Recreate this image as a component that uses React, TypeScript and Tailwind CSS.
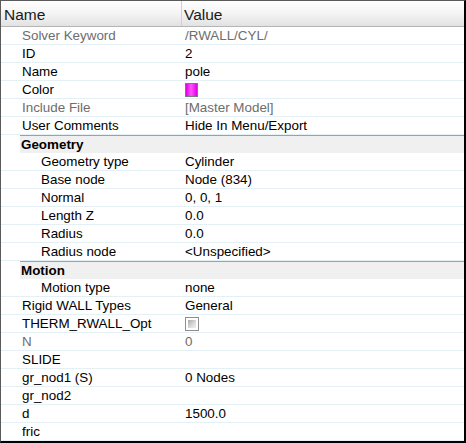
import React from 'react'

type Row = {
  name: string
  value?: string
  level?: 0 | 1
  disabled?: boolean
  kind?: 'section' | 'color' | 'check'
}

const rows: Row[] = [
  { name: 'Solver Keyword', value: '/RWALL/CYL/', disabled: true },
  { name: 'ID', value: '2' },
  { name: 'Name', value: 'pole' },
  { name: 'Color', kind: 'color' },
  { name: 'Include File', value: '[Master Model]', disabled: true },
  { name: 'User Comments', value: 'Hide In Menu/Export' },
  { name: 'Geometry', kind: 'section' },
  { name: 'Geometry type', value: 'Cylinder', level: 1 },
  { name: 'Base node', value: 'Node (834)', level: 1 },
  { name: 'Normal', value: '0, 0, 1', level: 1 },
  { name: 'Length Z', value: '0.0', level: 1 },
  { name: 'Radius', value: '0.0', level: 1 },
  { name: 'Radius node', value: '<Unspecified>', level: 1 },
  { name: 'Motion', kind: 'section' },
  { name: 'Motion type', value: 'none', level: 1 },
  { name: 'Rigid WALL Types', value: 'General' },
  { name: 'THERM_RWALL_Opt', kind: 'check' },
  { name: 'N', value: '0', disabled: true },
  { name: 'SLIDE' },
  { name: 'gr_nod1 (S)', value: '0 Nodes' },
  { name: 'gr_nod2' },
  { name: 'd', value: '1500.0' },
  { name: 'fric' },
]

function ValueCell({ row }: { row: Row }) {
  if (row.kind === 'color') {
    return (
      <span className="block h-[14px] w-[13px] border border-[#7a7a7a] bg-[linear-gradient(90deg,#e000e0_0%,#ff55ff_45%,#e000e0_100%)]" />
    )
  }
  if (row.kind === 'check') {
    return (
      <span className="block h-[14px] w-[14px] border border-[#8e8e8e] bg-white p-[2px]">
        <span className="block h-full w-full bg-[linear-gradient(135deg,#a9a9a9_0%,#dcdcdc_60%,#f0f0f0_100%)]" />
      </span>
    )
  }
  return <span className={row.disabled ? 'text-[#6d6d6d]' : 'text-[#000]'}>{row.value}</span>
}

export default function App() {
  return (
    <div
      className="h-[443px] w-[466px] overflow-hidden border-t border-l border-[#5a5a5a] border-r-2 border-b-2 border-r-black border-b-black bg-white text-[13.4px] leading-none"
      style={{ fontFamily: '"Liberation Sans", Arial, sans-serif' }}
    >
      <div className="flex h-[26px] border-b border-[#b5b5b5] bg-[linear-gradient(180deg,#ffffff_0%,#f4f4f4_50%,#e2e2e2_100%)] text-[15.5px] text-[#1a1a1a]">
        <div className="flex w-[181px] items-center border-r border-[#d0d0d0] pl-[3px] pt-[2px]">Name</div>
        <div className="flex flex-1 items-center pl-[2px] pt-[2px]">Value</div>
      </div>
      {rows.map((row) =>
        row.kind === 'section' ? (
          <div key={row.name} className="flex h-[18px] pl-[19px]">
            <div className="flex flex-1 items-center border-t border-[#a0a0a0] bg-[#f0f0f0] pl-[1px] font-bold text-black">
              {row.name}
            </div>
          </div>
        ) : (
          <div key={row.name} className="flex h-[18px] border-b border-[#e3f1f7]">
            <div
              className={`flex w-[181px] items-center pt-[1px] ${row.level === 1 ? 'pl-[40px]' : 'pl-[21px]'} ${
                row.disabled ? 'text-[#6d6d6d]' : 'text-black'
              }`}
            >
              {row.name}
            </div>
            <div className="flex flex-1 items-center pl-[3px] pt-[1px]">
              <ValueCell row={row} />
            </div>
          </div>
        ),
      )}
    </div>
  )
}
